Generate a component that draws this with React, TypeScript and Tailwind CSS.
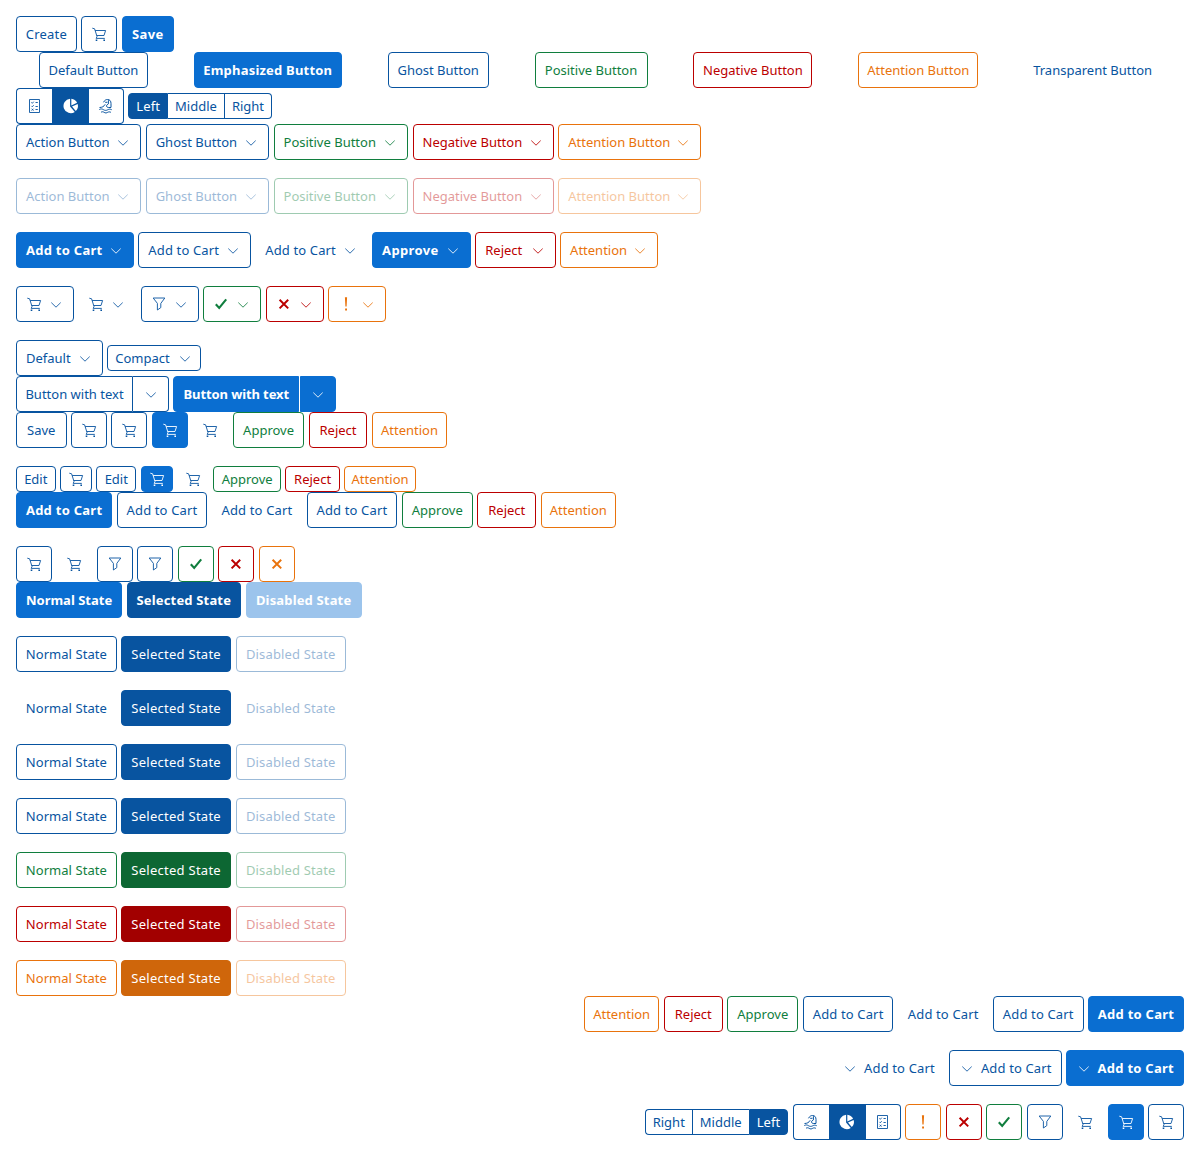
import React from "react";
import clsx from "clsx";

type Tone = "blue" | "emph" | "clear" | "green" | "red" | "orange" | "selBlue" | "selEmph" | "selGreen" | "selRed" | "selOrange";
type IconName = "cart" | "filter" | "check" | "cross" | "bang" | "list" | "pie" | "wave" | "down";

const TONES: Record<Tone, string> = {
  blue: "border-[#0854a0] text-[#0854a0] bg-white",
  emph: "border-[#0a6ed1] text-white bg-[#0a6ed1] font-bold",
  clear: "border-transparent text-[#0854a0]",
  green: "border-[#107e3e] text-[#107e3e] bg-white",
  red: "border-[#bb0000] text-[#bb0000] bg-white",
  orange: "border-[#e9730c] text-[#e9730c] bg-white",
  selBlue: "border-[#0854a0] text-white bg-[#0854a0]",
  selEmph: "border-[#0854a0] text-white bg-[#0854a0] font-bold",
  selGreen: "border-[#0d6733] text-white bg-[#0d6733]",
  selRed: "border-[#a20000] text-white bg-[#a20000]",
  selOrange: "border-[#cf660b] text-white bg-[#cf660b]",
};

const TRACKING: Record<string, string> = {
  "Selected State": "tracking-[0.26px]",
  "Disabled State": "tracking-[0.15px]",
  "Normal State": "tracking-[0.05px]",
  "Add to Cart": "tracking-[0.14px]",
  "Create": "tracking-[0.25px]",
  "Left": "tracking-[0.1px]",
};

const BOLD_TRACKING: Record<string, string> = {
  "Save": "tracking-[0.4px]",
  "Approve": "tracking-[0.35px]",
  "Add to Cart": "tracking-[0.26px]",
  "Emphasized Button": "tracking-[0.2px]",
  "Selected State": "tracking-[0.16px]",
  "Disabled State": "tracking-[0.16px]",
  "Button with text": "tracking-[-0.1px]",
};

function Icon({ name }: { name: IconName }) {
  return (
    <svg viewBox="0 0 16 16" className="size-4 shrink-0" fill="none" stroke="currentColor" strokeWidth="1">
      {name === "cart" && (
        <>
          <path d="M1.3 2.2 3.6 2.8 6 10.5M4.2 4.5h10.4L13 9.5H5.7M6 10.5 5.2 12.4h8.6" strokeWidth="0.9" />
          <path d="M4.7 14.3h1.6M12.4 14.3h1.6" strokeWidth="1.4" />
        </>
      )}
      {name === "filter" && <path d="M2.2 2h11.6L9.8 7.4v4.2L6.4 14V7.4Z" strokeLinejoin="round" strokeWidth="0.9" />}
      {name === "check" && <path d="M2.8 8.2 6.2 12 13.2 3.4" strokeWidth="2.1" />}
      {name === "cross" && <path d="M3.6 3.8l8.6 8.6M12.2 3.8l-8.6 8.6" strokeWidth="2" />}
      {name === "bang" && <path d="M6.9 1.2h2.2l-.5 9.4H7.4ZM7.1 12.5h1.9v1.9H7.1Z" fill="currentColor" stroke="none" />}
      {name === "down" && <path d="M3.3 6.6 8 11.2l4.7-4.6" strokeWidth="0.85" />}
      {name === "list" && (
        <>
          <path d="M2.5 1.5h10v13h-10Z" strokeWidth="0.9" />
          <path d="M4.4 4.4l.9.9 1.4-1.6M4.4 7.9l.9.9 1.4-1.6M4.6 10.7l1.900 1.900M6.5 10.7l-1.900 1.900M8.5 4.5h2.3M8.5 8.5h2.3M8.5 11.5h2.3" strokeWidth="0.9" />
        </>
      )}
      {name === "pie" && (
        <g fill="currentColor" stroke="none">
          <path d="M7.1.8A7.2 7.2 0 1 0 11.8 13.9L7.1 8.5Z" />
          <path d="M8.3.8a7.2 7.2 0 0 1 5.8 4L8.3 7.4Z" />
          <path d="M14.7 6a7.2 7.2 0 0 1-1.9 7L9 8.5Z" />
        </g>
      )}
      {name === "wave" && (
        <>
          <path d="M1.5 9.5c2.600 0 4.500-1 5.700-3.200M5.500 4.300c1-1.900 2.300-2.800 4-2.800 2.300 0 3.500 1.500 3.500 4v3.900M7.200 4.300h2.200M10.400 2.200v3.700L8.400 7.500c0 1.300.9 2 2.300 2h2.300" />
          <path d="M1.3 11.5c1.5-.8 2.800-.7 4.200.2s2.900.9 4.200.1 2.500-.8 4-.1M3 14.3c1.100-.8 2-.7 3.200.1s2.400.6 3.500-.1c1.100-.6 2-.5 3.200 0" />
        </>
      )}
    </svg>
  );
}

interface ButtonProps {
  w: string;
  tone?: Tone;
  label?: string;
  icon?: IconName;
  menu?: boolean;
  mirrored?: boolean;
  compact?: boolean;
  off?: boolean;
  shape?: string;
}

function Btn({ w, tone = "blue", label, icon, menu, mirrored, compact, off, shape = "rounded-[4px]" }: ButtonProps) {
  const tracking = tone === "emph" || tone === "selEmph" ? BOLD_TRACKING : TRACKING;
  return (
    <button
      className={clsx(
        "box-border flex shrink-0 items-center border whitespace-nowrap",
        compact ? "h-[26px]" : "h-9",
        menu ? (compact ? "justify-between pr-[7px] pl-[7px]" : "justify-between px-[9px]") : "justify-center",
        mirrored && "flex-row-reverse",
        off && "opacity-40",
        shape,
        w,
        TONES[tone],
      )}
    >
      {icon && <Icon name={icon} />}
      {label && <span className={tracking[label]}>{label}</span>}
      {menu && <Icon name="down" />}
    </button>
  );
}

function Row({ children, className = "mb-[18px]" }: { children: React.ReactNode; className?: string }) {
  return <div className={clsx("flex items-center gap-[4.47px]", className)}>{children}</div>;
}

function Joined({ children }: { children: React.ReactNode }) {
  return <div className="flex shrink-0">{children}</div>;
}

const MENU_ROW: [string, string, Tone][] = [
  ["Action Button", "w-[125.2px]", "blue"],
  ["Ghost Button", "w-[123.4px]", "blue"],
  ["Positive Button", "w-[134.6px]", "green"],
  ["Negative Button", "w-[141.2px]", "red"],
  ["Attention Button", "w-[142.6px]", "orange"],
];

const STATES: [Tone, Tone][] = [
  ["blue", "selBlue"],
  ["clear", "selBlue"],
  ["blue", "selBlue"],
  ["blue", "selBlue"],
  ["green", "selGreen"],
  ["red", "selRed"],
  ["orange", "selOrange"],
];

const SPLIT_ICONS: [IconName, Tone][] = [
  ["cart", "blue"],
  ["cart", "clear"],
  ["filter", "blue"],
  ["check", "green"],
  ["cross", "red"],
  ["bang", "orange"],
];

const ICON_ROW: [IconName, Tone][] = [
  ["cart", "blue"],
  ["cart", "clear"],
  ["filter", "blue"],
  ["filter", "blue"],
  ["check", "green"],
  ["cross", "red"],
  ["cross", "orange"],
];

export default function App() {
  return (
    <main className="h-[1156px] w-[1200px] overflow-hidden bg-white p-4 font-['Noto_Sans','Open_Sans',sans-serif] text-[13px] leading-none">
      <Row className="">
        <Btn w="w-[60.85px]" label="Create" />
        <Btn w="w-9" icon="cart" />
        <Btn w="w-[52px]" tone="emph" label="Save" />
      </Row>

      <div className="flex justify-around">
        <Btn w="w-[108.9px]" label="Default Button" />
        <Btn w="w-[148.1px]" tone="emph" label="Emphasized Button" />
        <Btn w="w-[101px]" label="Ghost Button" />
        <Btn w="w-[113px]" tone="green" label="Positive Button" />
        <Btn w="w-[119px]" tone="red" label="Negative Button" />
        <Btn w="w-[120px]" tone="orange" label="Attention Button" />
        <Btn w="w-[136.9px]" tone="clear" label="Transparent Button" />
      </div>

      <Row className="">
        <Joined>
          <Btn w="w-9" icon="list" shape="rounded-l-[4px] border-r-0" />
          <Btn w="w-[37px]" icon="pie" tone="selBlue" shape="" />
          <Btn w="w-[35px]" icon="wave" shape="rounded-r-[4px] border-l-0" />
        </Joined>
        <Joined>
          <Btn w="w-[39.5px]" compact label="Left" tone="selBlue" shape="rounded-l-[4px]" />
          <Btn w="w-[57px]" compact label="Middle" shape="border-l-0" />
          <Btn w="w-[47px]" compact label="Right" shape="rounded-r-[4px] border-l-0" />
        </Joined>
      </Row>

      <Row>
        {MENU_ROW.map(([l, w, t]) => (
          <Btn key={l} w={w} tone={t} label={l} menu />
        ))}
      </Row>
      <Row>
        {MENU_ROW.map(([l, w, t]) => (
          <Btn key={l} w={w} tone={t} label={l} menu off />
        ))}
      </Row>

      <Row>
        <Btn w="w-[117.9px]" tone="emph" label="Add to Cart" menu />
        <Btn w="w-[112.4px]" label="Add to Cart" menu />
        <Btn w="w-[112.4px]" tone="clear" label="Add to Cart" menu />
        <Btn w="w-[98.7px]" tone="emph" label="Approve" menu />
        <Btn w="w-[80.4px]" tone="red" label="Reject" menu />
        <Btn w="w-[97.7px]" tone="orange" label="Attention" menu />
      </Row>

      <Row>
        {SPLIT_ICONS.map(([i, t], n) => (
          <Btn key={n} w="w-[58px]" icon={i} tone={t} menu />
        ))}
      </Row>

      <Row className="">
        <Btn w="w-[86.8px]" label="Default" menu />
        <Btn w="w-[93.7px]" label="Compact" menu compact />
      </Row>

      <Row className="">
        <Joined>
          <Btn w="w-[117px]" label="Button with text" shape="rounded-l-[4px]" />
          <Btn w="w-9" icon="down" shape="rounded-r-[4px] border-l-0" />
        </Joined>
        <div className="flex shrink-0 gap-px">
          <Btn w="w-[125.6px]" tone="emph" label="Button with text" shape="rounded-l-[4px]" />
          <Btn w="w-9" tone="emph" icon="down" shape="rounded-r-[4px]" />
        </div>
      </Row>

      <Row>
        <Btn w="w-[50.55px]" label="Save" />
        <Btn w="w-9" icon="cart" />
        <Btn w="w-9" icon="cart" />
        <Btn w="w-9" icon="cart" tone="emph" />
        <Btn w="w-9" icon="cart" tone="clear" />
        <Btn w="w-[71.35px]" tone="green" label="Approve" />
        <Btn w="w-[58.6px]" tone="red" label="Reject" />
        <Btn w="w-[75.4px]" tone="orange" label="Attention" />
      </Row>

      <Row className="">
        <Btn w="w-[39.55px]" compact label="Edit" />
        <Btn w="w-8" compact icon="cart" />
        <Btn w="w-[39.6px]" compact label="Edit" />
        <Btn w="w-8" compact icon="cart" tone="emph" />
        <Btn w="w-8" compact icon="cart" tone="clear" />
        <Btn w="w-[67.35px]" compact tone="green" label="Approve" />
        <Btn w="w-[54.6px]" compact tone="red" label="Reject" />
        <Btn w="w-[71.4px]" compact tone="orange" label="Attention" />
      </Row>

      <Row>
        <Btn w="w-[96.2px]" tone="emph" label="Add to Cart" />
        <Btn w="w-[90.52px]" label="Add to Cart" />
        <Btn w="w-[90.52px]" tone="clear" label="Add to Cart" />
        <Btn w="w-[90.52px]" label="Add to Cart" />
        <Btn w="w-[71.35px]" tone="green" label="Approve" />
        <Btn w="w-[58.75px]" tone="red" label="Reject" />
        <Btn w="w-[75.3px]" tone="orange" label="Attention" />
      </Row>

      <Row className="">
        {ICON_ROW.map(([i, t], n) => (
          <Btn key={n} w="w-9" icon={i} tone={t} />
        ))}
      </Row>

      <Row>
        <Btn w="w-[106.1px]" tone="emph" label="Normal State" />
        <Btn w="w-[114.5px]" tone="selEmph" label="Selected State" />
        <Btn w="w-[116.2px]" tone="emph" label="Disabled State" off />
      </Row>

      {STATES.map(([tone, selected], n) => (
        <Row key={n} className={n === 6 ? "" : "mb-[18px]"}>
          <Btn w="w-[100.7px]" tone={tone} label="Normal State" />
          <Btn w="w-[110px]" tone={selected} label="Selected State" />
          <Btn w="w-[110.3px]" tone={tone} label="Disabled State" off />
        </Row>
      ))}

      <Row className="mb-[18px] justify-end">
        <Btn w="w-[75.4px]" tone="orange" label="Attention" />
        <Btn w="w-[58.9px]" tone="red" label="Reject" />
        <Btn w="w-[71.2px]" tone="green" label="Approve" />
        <Btn w="w-[90.6px]" label="Add to Cart" />
        <Btn w="w-[90.6px]" tone="clear" label="Add to Cart" />
        <Btn w="w-[90.6px]" label="Add to Cart" />
        <Btn w="w-[96px]" tone="emph" label="Add to Cart" />
      </Row>

      <Row className="mb-[18px] justify-end">
        <Btn w="w-[112.4px]" tone="clear" label="Add to Cart" menu mirrored />
        <Btn w="w-[112.4px]" label="Add to Cart" menu mirrored />
        <Btn w="w-[117.9px]" tone="emph" label="Add to Cart" menu mirrored />
      </Row>

      <Row className="justify-end">
        <Joined>
          <Btn w="w-[47px]" compact label="Right" shape="rounded-l-[4px] border-r-0" />
          <Btn w="w-[57px]" compact label="Middle" shape="border-r-0" />
          <Btn w="w-[39.5px]" compact label="Left" tone="selBlue" shape="rounded-r-[4px]" />
        </Joined>
        <Joined>
          <Btn w="w-9" icon="wave" shape="rounded-l-[4px] border-r-0" />
          <Btn w="w-[37px]" icon="pie" tone="selBlue" shape="" />
          <Btn w="w-[35px]" icon="list" shape="rounded-r-[4px] border-l-0" />
        </Joined>
        <Btn w="w-9" icon="bang" tone="orange" />
        <Btn w="w-9" icon="cross" tone="red" />
        <Btn w="w-9" icon="check" tone="green" />
        <Btn w="w-9" icon="filter" />
        <Btn w="w-9" icon="cart" tone="clear" />
        <Btn w="w-9" icon="cart" tone="emph" />
        <Btn w="w-9" icon="cart" />
      </Row>
    </main>
  );
}
